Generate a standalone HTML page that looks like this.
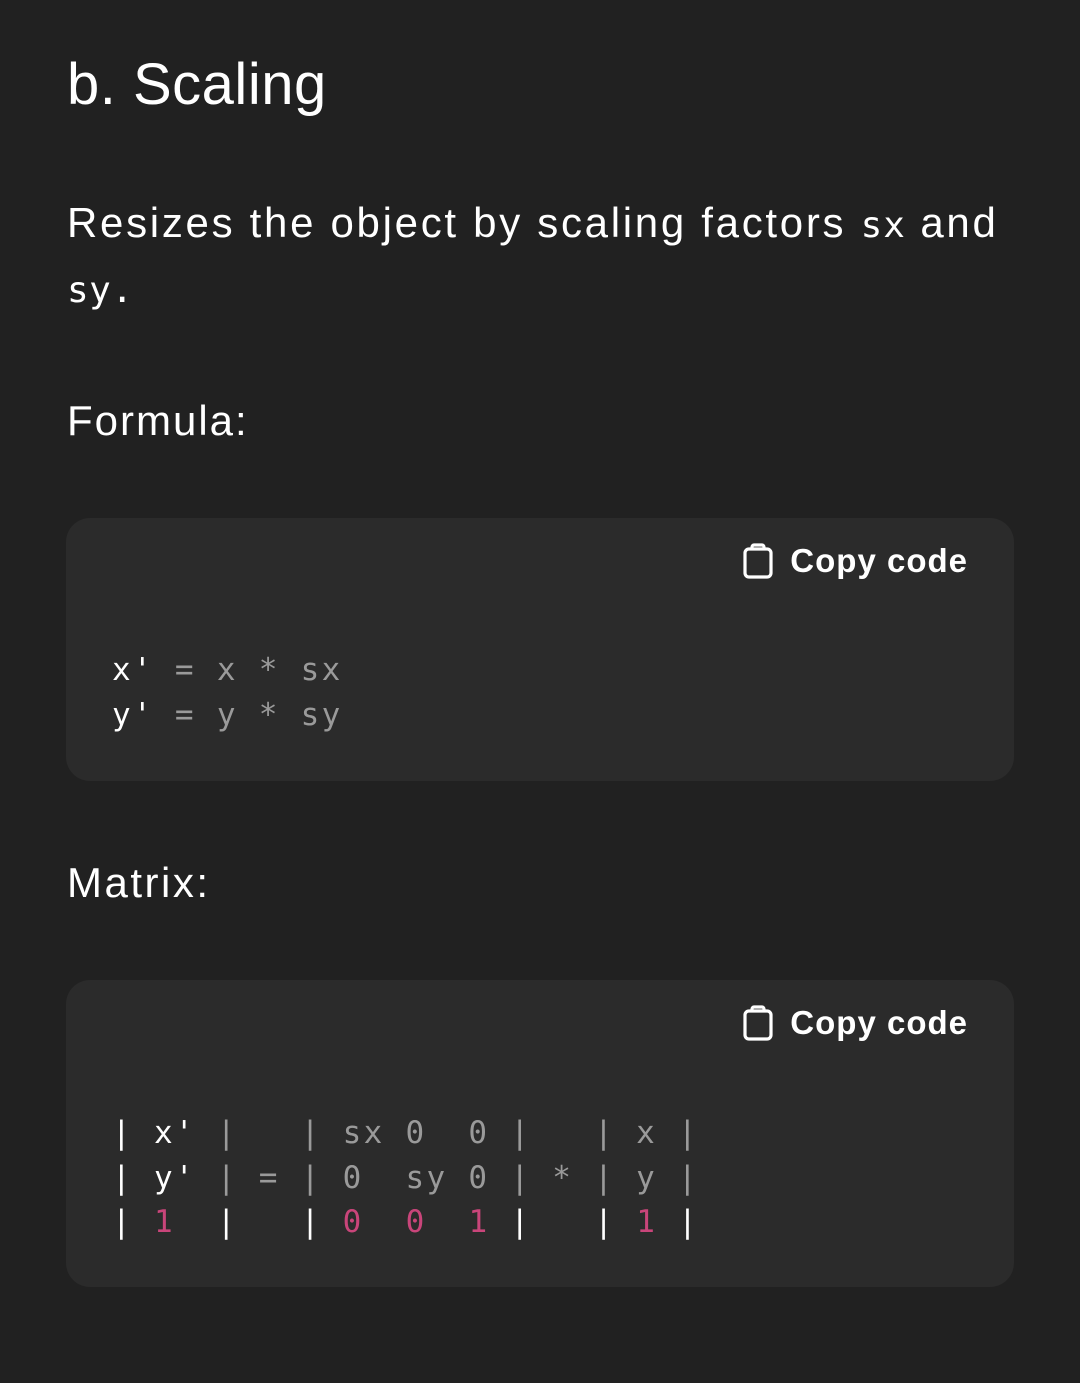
<!DOCTYPE html>
<html><head><meta charset="utf-8"><style>
body{margin:0;width:1080px;height:1383px;background:#212121;color:#fff;font-family:"Liberation Sans","DejaVu Sans",sans-serif;position:relative;overflow:hidden}
.a{position:absolute;white-space:nowrap}
h1{position:absolute;left:67px;top:50px;margin:0;font-weight:400;font-size:58px;line-height:70px;letter-spacing:0.5px}
.p{font-size:42px;line-height:50px;letter-spacing:2.7px}
.m{font-family:"DejaVu Sans Mono","Liberation Mono",monospace}
.blk{position:absolute;left:66px;width:948px;background:#2b2b2b;border-radius:24px}
.copy{position:absolute;right:46px;top:24px;font-size:33px;font-weight:700;letter-spacing:1px;display:flex;align-items:center;gap:16px}
pre{position:absolute;left:46px;margin:0;font-family:"DejaVu Sans Mono","Liberation Mono",monospace;font-size:31px;letter-spacing:2.3px;line-height:44.5px;color:#9a9a9a}
.w{color:#fff}.r{color:#c9457a}
</style></head><body>
<h1>b. Scaling</h1>
<div class="a p" style="left:67px;top:198px">Resizes the object by scaling factors <span class="m" style="font-size:36px;letter-spacing:1px">sx</span> and</div>
<div class="a p m" style="left:67px;top:266px;font-size:36px;letter-spacing:0.5px">sy.</div>
<div class="a p" style="left:67px;top:396px;letter-spacing:2px">Formula:</div>
<div class="blk" style="top:518px;height:263px">
<div class="copy"><svg width="32" height="36" viewBox="0 0 32 36" fill="none" stroke="#fff" stroke-width="3.2"><rect x="3" y="6" width="26" height="28" rx="4"/><path d="M10 6V4a2 2 0 0 1 2-2h8a2 2 0 0 1 2 2v2"/></svg>Copy code</div>
<pre style="top:130px"><span class="w">x'</span> = x * sx
<span class="w">y'</span> = y * sy</pre>
</div>
<div class="a p" style="left:67px;top:858px;letter-spacing:2.5px">Matrix:</div>
<div class="blk" style="top:980px;height:307px">
<div class="copy"><svg width="32" height="36" viewBox="0 0 32 36" fill="none" stroke="#fff" stroke-width="3.2"><rect x="3" y="6" width="26" height="28" rx="4"/><path d="M10 6V4a2 2 0 0 1 2-2h8a2 2 0 0 1 2 2v2"/></svg>Copy code</div>
<pre style="top:131px"><span class="w">|</span> <span class="w">x'</span> |   | sx 0  0 |   | x |
<span class="w">|</span> <span class="w">y'</span> | = | 0  sy 0 | * | y |
<span class="w">|</span> <span class="r">1</span>  <span class="w">|</span>   <span class="w">|</span> <span class="r">0</span>  <span class="r">0</span>  <span class="r">1</span> <span class="w">|</span>   <span class="w">|</span> <span class="r">1</span> <span class="w">|</span></pre>
</div>
</body></html>
